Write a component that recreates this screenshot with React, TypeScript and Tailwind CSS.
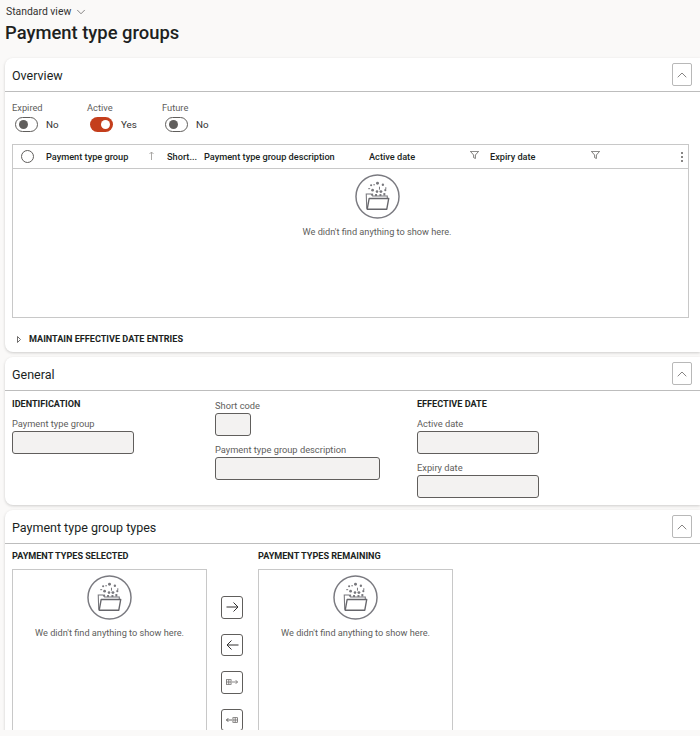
// Payment type groups form page
import { ChevronDown, ChevronUp } from 'lucide-react';

const FONT = "font-['Roboto','Noto_Sans',sans-serif]";

function EmptyIcon() {
  return (
    <svg width="45" height="45" viewBox="0 0 46 46" fill="none" className="block">
      <circle cx="23" cy="23" r="22" stroke="#7a7a80" strokeWidth="1.5" />
      <path d="M12 35.500 L11.500 20.500 h5 l1.500 2 h15 v2" stroke="#77777c" strokeWidth="1.1" />
      <path d="M12.500 36 L14.500 25 h20 L32.500 36 Z" stroke="#66666b" strokeWidth="1.4" strokeLinejoin="round" />
      <g fill="#77777c">
        <circle cx="23" cy="9.500" r="1.500" />
        <circle cx="28.500" cy="11" r="1.200" />
        <circle cx="16.500" cy="11.500" r="1.100" />
        <circle cx="19.500" cy="11" r=".8" />
        <rect x="24.500" y="13" width="1" height="3" />
        <circle cx="18" cy="16.500" r="1.400" />
        <circle cx="22.500" cy="18" r="1.300" />
        <circle cx="26.500" cy="18" r="1.500" />
        <circle cx="31" cy="16.500" r="1.100" />
        <rect x="31" y="13.500" width="1" height="2" />
        <rect x="13.500" y="14.500" width="2" height="1" />
        <rect x="17" y="20" width="1.500" height="2" />
        <rect x="20.500" y="20.500" width="2" height="2" />
        <rect x="25" y="20.500" width="2" height="2" />
        <rect x="29" y="19.500" width="2" height="2.500" />
      </g>
    </svg>
  );
}

function EmptyState({ className }: { className?: string }) {
  return (
    <div className={`flex flex-col items-center ${className ?? ''}`}>
      <EmptyIcon />
      <p className="mt-[6px] text-[9.2px] leading-[14px] text-[#605e5c]">We didn't find anything to show here.</p>
    </div>
  );
}

function Toggle({ on }: { on?: boolean }) {
  if (on) {
    return (
      <span className="flex h-[15px] w-[23px] items-center justify-end rounded-full bg-[#c43e1c] pr-[3px]">
        <span className="h-[9px] w-[9px] rounded-full bg-white" />
      </span>
    );
  }
  return (
    <span className="flex h-[15px] w-[23px] items-center rounded-full border border-[#605e5c] bg-white pl-[3px]">
      <span className="h-[9px] w-[9px] rounded-full bg-[#605e5c]" />
    </span>
  );
}

function ToggleField({ label, value, on, width }: { label: string; value: string; on?: boolean; width: string }) {
  return (
    <div className={width}>
      <div className="pt-[1px] text-[9.3px] leading-[14px] text-[#605e5c]">{label}</div>
      <div className="mt-[2px] ml-[3px] flex items-center gap-2">
        <Toggle on={on} />
        <span className="text-[9.8px] leading-[15px] text-[#323130]">{value}</span>
      </div>
    </div>
  );
}

function CollapseButton() {
  return (
    <button type="button" className="flex h-[23px] w-[20px] items-center justify-center rounded-[2px] border border-[#b8b8b8] bg-white text-[#484644]">
      <ChevronUp size={16} strokeWidth={1} />
    </button>
  );
}

function SectionHeader({ title }: { title: string }) {
  return (
    <div className="flex h-[34px] items-center justify-between border-b border-[#bdbdbd] pr-2 pl-[7px]">
      <h2 className="pt-[3px] text-[12.5px] font-normal text-[#201f1e]">{title}</h2>
      <CollapseButton />
    </div>
  );
}

function Card({ title, className, children }: { title: string; className?: string; children: React.ReactNode }) {
  return (
    <section className={`ml-[5px] rounded-l-lg bg-white shadow-[0_1px_3px_rgba(0,0,0,0.18)] ${className ?? ''}`}>
      <SectionHeader title={title} />
      {children}
    </section>
  );
}

function FilterIcon() {
  return (
    <svg width="9" height="8" viewBox="0 0 9 8" fill="none" stroke="#605e5c" strokeWidth=".8" className="mr-[0.5px] mb-[2px] block">
      <path d="M.4.4 h8.200 L5.400 4 V7.500 L3.600 6.600 V4 Z" />
    </svg>
  );
}

function ColHead({ label, width, children }: { label: string; width: string; children?: React.ReactNode }) {
  return (
    <div className={`flex shrink-0 items-center text-[9.2px] font-medium text-[#201f1e] ${width}`}>
      <span className="flex-1 whitespace-nowrap">{label}</span>
      {children}
    </div>
  );
}

function Field({ label, width, className }: { label: string; width: string; className?: string }) {
  return (
    <div className={className}>
      <div className="text-[9.3px] leading-[14px] text-[#605e5c]">{label}</div>
      <div className={`h-[23px] rounded-[3px] border border-[#605e5c] bg-[#f3f2f1] ${width}`} />
    </div>
  );
}

function GroupLabel({ children }: { children: React.ReactNode }) {
  return <div className="text-[9.1px] leading-[14px] font-bold text-[#201f1e] uppercase">{children}</div>;
}

function ListBox() {
  return (
    <div className="h-[170px] w-[195px] border border-[#c8c8c8] pt-[5px]">
      <EmptyState />
    </div>
  );
}

function MoveButton({ children }: { children: React.ReactNode }) {
  return (
    <button type="button" className="flex h-[22.5px] w-[22px] items-center justify-center rounded-[3px] border border-[#605e5c] bg-white">
      {children}
    </button>
  );
}

const GRID = (
  <g stroke="#605e5c" strokeWidth=".8">
    <rect x=".5" y=".5" width="5" height="5" />
    <path d="M3 .5v5M.5 3h5" />
  </g>
);

export default function App() {
  return (
    <div className={`h-[736px] w-[700px] overflow-hidden bg-[#faf9f8] ${FONT}`}>
      <div className="h-[730px] overflow-hidden">
        <div className="flex h-[22px] items-center gap-[3px] pl-[6px] pt-[1px] text-[10.4px] text-[#323130]">
          Standard view
          <ChevronDown size={14} strokeWidth={1} />
        </div>
        <h1 className="ml-[5px] h-[36px] text-[18.4px] leading-[21px] font-medium text-[#201f1e]">Payment type groups</h1>

        <Card title="Overview" className="h-[294px]">
          <div className="flex pt-2 pl-[7px]">
            <ToggleField label="Expired" value="No" width="w-[75px]" />
            <ToggleField label="Active" value="Yes" on width="w-[75px]" />
            <ToggleField label="Future" value="No" width="w-[75px]" />
          </div>
          <div className="mt-[12px] mr-[11px] ml-[7px] h-[174px] border border-[#c8c8c8]">
            <div className="flex h-[24px] items-center border-b border-[#c8c8c8]">
              <span className="mr-[12px] ml-2 h-[13px] w-[13px] shrink-0 rounded-full border border-[#605e5c]" />
              <ColHead label="Payment type group" width="w-[110px]">
                <svg width="7" height="9" viewBox="0 0 7 9" fill="none" stroke="#a19f9d" strokeWidth=".9" className="mr-[1px] mb-[2px]">
                  <path d="M3.500 9V1M1.500 3 3.500 1 5.500 3" />
                </svg>
              </ColHead>
              <span className="w-[11px] shrink-0" />
              <ColHead label="Short..." width="w-[37px]" />
              <ColHead label="Payment type group description" width="w-[165px]" />
              <ColHead label="Active date" width="w-[110px]">
                <FilterIcon />
              </ColHead>
              <span className="w-[11px] shrink-0" />
              <ColHead label="Expiry date" width="w-[110px]">
                <FilterIcon />
              </ColHead>
              <div className="ml-auto mr-[5px] flex flex-col gap-[2px]">
                <span className="h-[2px] w-[2px] rounded-full bg-[#605e5c]" />
                <span className="h-[2px] w-[2px] rounded-full bg-[#605e5c]" />
                <span className="h-[2px] w-[2px] rounded-full bg-[#605e5c]" />
              </div>
            </div>
            <EmptyState className="pt-[5px] pl-[53px]" />
          </div>
          <div className="mt-[14px] flex items-center gap-[8px] pl-[12px] text-[9.1px] leading-[14px] font-bold text-[#201f1e] uppercase">
            <svg width="4" height="7" viewBox="0 0 4 7" fill="#fff" stroke="#605e5c" strokeWidth=".9">
              <path d="M.5.5 3.500 3.500 .5 6.500Z" />
            </svg>
            Maintain effective date entries
          </div>
        </Card>

        <Card title="General" className="mt-[5px] h-[148px]">
          <div className="grid grid-cols-[203px_202px_1fr] pl-[7px]">
            <div className="pt-[6px]">
              <GroupLabel>Identification</GroupLabel>
              <Field label="Payment type group" width="w-[122px]" className="mt-[6px]" />
            </div>
            <div className="pt-2">
              <Field label="Short code" width="w-[36px]" />
              <Field label="Payment type group description" width="w-[165px]" className="mt-[7px]" />
            </div>
            <div className="pt-[6px]">
              <GroupLabel>Effective date</GroupLabel>
              <Field label="Active date" width="w-[122px]" className="mt-[6px]" />
              <Field label="Expiry date" width="w-[122px]" className="mt-[7px]" />
            </div>
          </div>
        </Card>

        <Card title="Payment type group types" className="mt-[5px] h-[240px]">
          <div className="flex pl-[7px] pt-[5px]">
            <div>
              <GroupLabel>Payment types selected</GroupLabel>
              <div className="mt-[6px]">
                <ListBox />
              </div>
            </div>
            <div className="mt-[47px] mr-[15px] ml-[14px] flex w-[22px] flex-col gap-[15px]">
              <MoveButton>
                <svg width="13" height="10" viewBox="0 0 13 10" fill="none" stroke="#323130" strokeWidth="1">
                  <path d="M.5 5h11.500M7.500 .5 12 5 7.500 9.500" />
                </svg>
              </MoveButton>
              <MoveButton>
                <svg width="13" height="10" viewBox="0 0 13 10" fill="none" stroke="#323130" strokeWidth="1">
                  <path d="M12.500 5H1M5.500 .5 1 5l4.500 4.500" />
                </svg>
              </MoveButton>
              <MoveButton>
                <svg width="12" height="6" viewBox="0 0 13 6" fill="none">
                  {GRID}
                  <path d="M6.500 3h6M10.500 1l2 2-2 2" stroke="#605e5c" strokeWidth=".8" />
                </svg>
              </MoveButton>
              <MoveButton>
                <svg width="12" height="6" viewBox="0 0 13 6" fill="none">
                  <g transform="translate(7 0)">{GRID}</g>
                  <path d="M6.500 3h-6M2.500 1l-2 2 2 2" stroke="#323130" strokeWidth=".8" />
                </svg>
              </MoveButton>
            </div>
            <div>
              <GroupLabel>Payment types remaining</GroupLabel>
              <div className="mt-[6px]">
                <ListBox />
              </div>
            </div>
          </div>
        </Card>
      </div>
    </div>
  );
}
